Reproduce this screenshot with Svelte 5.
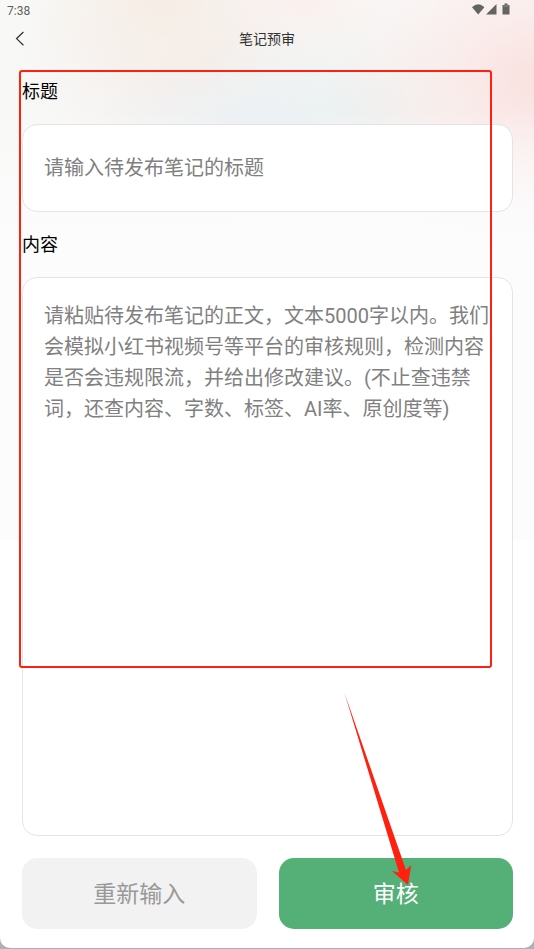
<script lang="ts">
	let title = ''
	let content = ''

	const reset = () => {
		title = ''
		content = ''
	}
</script>


<div class="screen">
	<div class="status">
		<span>7:38</span>

		<svg width="40" height="14" viewBox="0 0 40 14" aria-hidden="true">
			<path d="M0 4.2Q6.2-1.5 12.4 4.2L6.2 11.5Z" />
			<path d="M14 11.5L24.5 1V11.5Z" />
			<path d="M30.5 2h2V.5h3V2h2v9.5h-7Z" />
			<path d="M31.5 3h5" stroke="#aaa" stroke-width=".7" />
		</svg>
	</div>

	<header>
		<button class="back" aria-label="返回" type="button">
			<svg width="10" height="16" viewBox="0 0 10 16" aria-hidden="true">
				<path d="M8.4 1L1.6 7.6L8.4 14.2" />
			</svg>
		</button>
		<h1>笔记预审</h1>
	</header>

	<form on:submit|preventDefault>
		<label for="title">标题</label>
		<input id="title" placeholder="请输入待发布笔记的标题" bind:value={title} />

		<label for="content">内容</label>
		<textarea
			id="content"
			placeholder="请粘贴待发布笔记的正文，文本5000字以内。我们会模拟小红书视频号等平台的审核规则，检测内容是否会违规限流，并给出修改建议。(不止查违禁词，还查内容、字数、标签、AI率、原创度等)"
			bind:value={content}
		></textarea>

		<div class="actions">
			<button type="button" on:click={reset}>重新输入</button>
			<button type="submit" class="primary">审核</button>
		</div>
	</form>

	<div class="highlight"></div>

	<svg class="arrow" width="70" height="196" viewBox="0 0 70 196" aria-hidden="true">
		<path d="M-.5 2L61 179L66.2 174L63 194L47 180L54 181.5Z" />
	</svg>
</div>


<style>
	:global(body) {
		background: #b0b0b0;
	}

	.screen {
		position: relative;
		display: flex;
		flex-direction: column;
		box-sizing: border-box;
		min-height: calc(100vh - 1px);
		border-radius: 0 0 10px 10px;
		overflow: hidden;

		color: #000;
		font-family: Roboto, "Noto Sans CJK SC", sans-serif;
		background:
			linear-gradient(#fcfcfc00 110px, #fcfcfc 250px) 0 0 / 100% 540px no-repeat,
			radial-gradient(210px 170px at 100% 80px, #fae1df, #fae6e4a0 40%, #fbf0ef00) 0 0 / 100% 540px no-repeat,
			radial-gradient(180px 80px at 50% 130px, #e9eff3, #ebf0f3a0 40%, #f2f4f500) 0 0 / 100% 540px no-repeat,
			radial-gradient(170px 110px at 66% 110px, #ecf3f1, #eff4f2a0 40%, #f4f6f500) 0 0 / 100% 540px no-repeat,
			radial-gradient(90px 60px at 58% 0, #fbf0ee, #fbf4f200) 0 0 / 100% 540px no-repeat,
			radial-gradient(130px 100px at 30% 0, #f6ede4, #f6efe8a0 40%, #f8f4f000) 0 0 / 100% 540px no-repeat,
			radial-gradient(190px 130px at 36% 55px, #f5ece9, #f5eeeba0 45%, #f7f4f300) 0 0 / 100% 540px no-repeat,
			linear-gradient(90deg, #f8f9f7, #fafafa) 0 0 / 100% 540px no-repeat,
			#fff;
	}

	.status {
		display: flex;
		justify-content: space-between;
		align-items: center;
		height: 22px;
		padding: 0 22px 0 7px;

		color: #5f5f5f;
		font-size: 12px;

		svg {
			fill: #636363;
			margin-bottom: 2px;
		}
	}

	header {
		display: grid;
		grid-template-columns: 40px 1fr 40px;
		align-items: center;
		height: 34px;
	}

	h1 {
		margin: 0;
		color: #333;
		font-size: 14px;
		font-weight: 400;
		line-height: 20px;
		text-align: center;
	}

	button {
		padding: 0;
		border: 0;
		font: inherit;
		cursor: pointer;
	}

	.back {
		display: grid;
		place-items: center;
		height: 34px;
		background: none;

		path {
			fill: none;
			stroke: #333;
			stroke-width: 1.3;
		}
	}

	form {
		flex: 1;
		display: flex;
		flex-direction: column;
		padding: 3px 21px 19px 22px;
	}

	label {
		display: flex;
		align-items: center;
		box-sizing: border-box;
		height: 65px;
		padding-bottom: 4px;
		font-size: 18px;
	}

	input,
	textarea {
		box-sizing: border-box;
		width: 100%;
		border: 1px solid #e4e4e4;
		border-radius: 15px;
		outline: 0;

		color: #000;
		font: inherit;
		font-size: 20px;
		background: #fff;

		&::placeholder {
			color: #808080;
			opacity: 1;
		}
	}

	input {
		height: 88px;
		padding: 0 21px;
	}

	textarea {
		flex: 1;
		padding: 23px 21px;
		line-height: 31px;
		resize: none;
	}

	.actions {
		display: grid;
		grid-template-columns: 1fr 1fr;
		gap: 22px;
		margin-top: 22px;

		button {
			height: 71px;
			padding-bottom: 4px;
			border-radius: 15px;

			color: #999;
			font-size: 23px;
			background: #f2f2f2;
		}

		.primary {
			color: #fff;
			background: #55b078;
		}
	}

	.highlight {
		position: absolute;
		inset: 70px 42px 280px 19px;
		border: 2px solid #ff2010;
		border-radius: 3px;
		pointer-events: none;
	}

	.arrow {
		position: absolute;
		right: 119px;
		bottom: 61px;
		overflow: visible;
		fill: #ff2010;
		pointer-events: none;
	}
</style>
